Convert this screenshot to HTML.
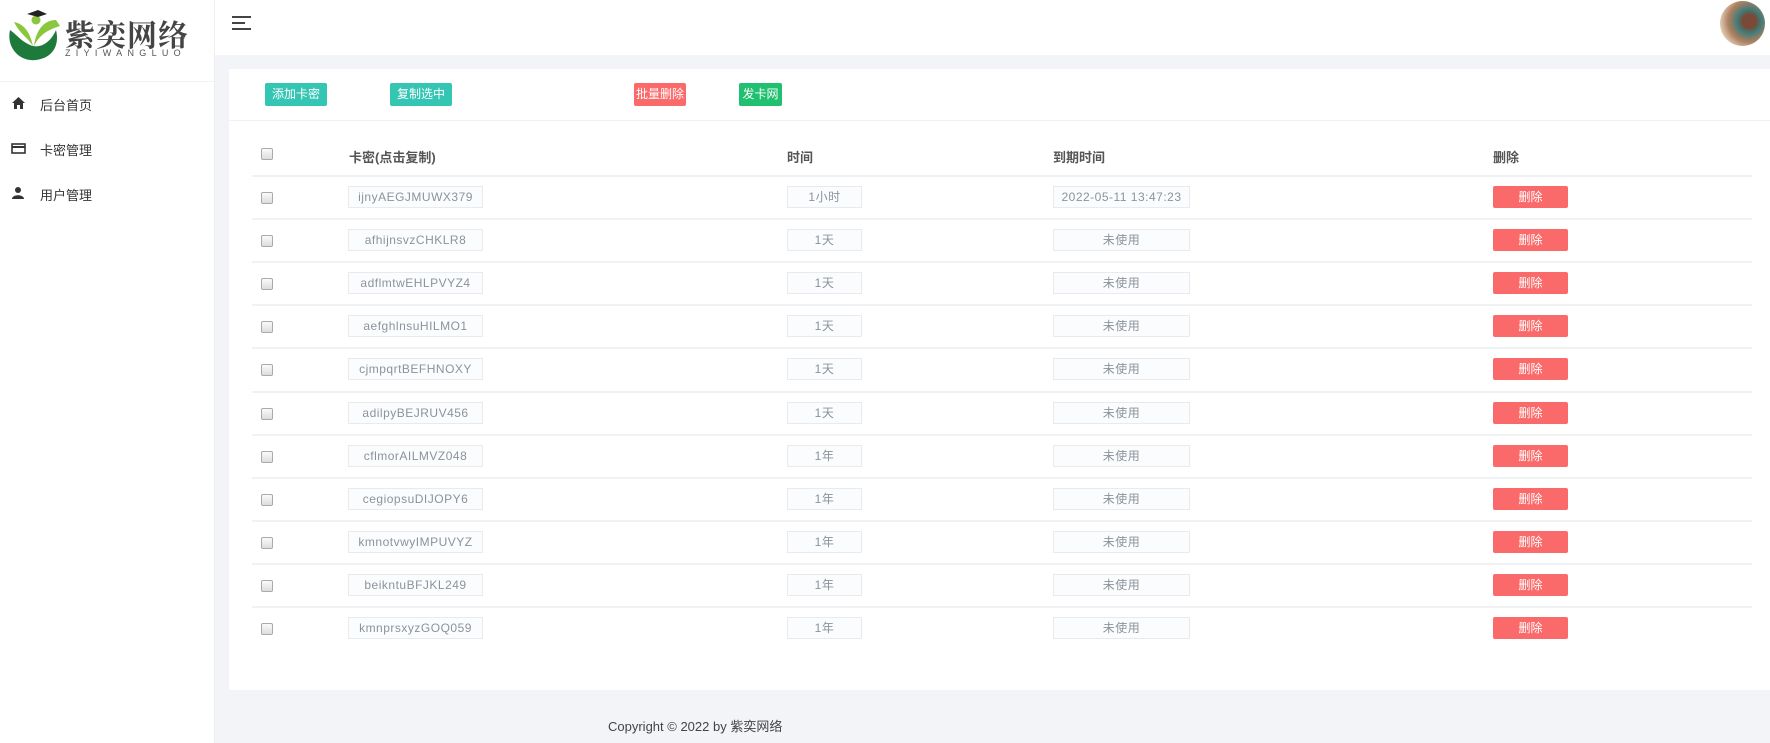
<!DOCTYPE html>
<html><head><meta charset="utf-8"><style>
*{margin:0;padding:0;box-sizing:border-box}
body{width:1770px;height:743px;overflow:hidden;background:#f3f4f8;font-family:"Liberation Sans","Noto Sans CJK SC",sans-serif;position:relative;color:#555}
.abs{position:absolute}
#side{left:0;top:0;width:215px;height:743px;background:#fff;border-right:1px solid #eceef2}
#head{left:215px;top:0;width:1555px;height:55px;background:#fff}
#card{left:229px;top:69px;width:1541px;height:621px;background:#fff}
.btn{position:absolute;top:83px;height:23px;color:#fff;font-size:12px;line-height:23px;text-align:center;border-radius:2px}
.nav{position:absolute;left:0;font-size:13px;color:#333}
.nav span{position:absolute;left:40px;top:-9px;white-space:nowrap}
.row{position:absolute;left:252px;width:1500px;height:43px;border-top:2px solid #f1f2f4}
.cb{position:absolute;left:9px;width:12px;height:12px;border:1px solid #aaa;border-radius:2px;background:linear-gradient(#fafafa,#ddd)}
.inp{position:absolute;height:22px;border:1px solid #e8eaee;background:#fbfcfd;color:#8a939d;font-size:12px;line-height:20px;text-align:center;letter-spacing:.5px}
.del{position:absolute;left:1241px;width:75px;height:22px;background:#fb6a6a;color:#fff;font-size:12px;line-height:22px;text-align:center;border-radius:2px}
.th{position:absolute;top:147px;font-size:13px;font-weight:bold;color:#555}
</style></head><body>
<div id="side" class="abs">
 <svg class="abs" style="left:6px;top:8px" width="56" height="56" viewBox="0 0 56 52">
  <path d="M4 20 C0 38 14 52 30 50 C46 48 54 36 50 20 C44 34 32 40 22 34 C14 30 10 24 4 20Z" fill="#1e7a3a"/>
  <path d="M8 12 C14 24 22 28 27 36 C24 22 18 14 8 12Z" fill="#8cc63f"/>
  <path d="M50 10 C38 10 30 20 28 36 C34 24 42 20 54 16Z" fill="#8cc63f"/>
  <circle cx="30" cy="10" r="4.5" fill="#8cc63f"/>
  <path d="M21 4 L32 0 L41 4 L32 7Z" fill="#222"/>
 </svg>
 <div class="abs" style="left:65px;top:11px;font-size:30px;font-weight:bold;color:#444;letter-spacing:1px;font-family:'Noto Serif CJK SC','Noto Sans CJK SC',serif">紫奕网络</div>
 <div class="abs" style="left:65px;top:48px;font-size:9px;color:#555;letter-spacing:5.3px">ZIYIWANGLUO</div>
 <div class="abs" style="left:0;top:81px;width:214px;border-top:1px solid #f3f3f3"></div>
 <div class="nav" style="top:104px"><svg class="abs" style="left:12px;top:-7px" width="13" height="12" viewBox="0 0 13 12"><path d="M6.5 0 L13 6 H11 V12 H8 V8 H5 V12 H2 V6 H0Z" fill="#333"/></svg><span>后台首页</span></div>
 <div class="nav" style="top:149px"><svg class="abs" style="left:11px;top:-6px" width="15" height="11" viewBox="0 0 15 11"><rect x="1" y="1" width="13" height="9" fill="none" stroke="#333" stroke-width="1.6"/><rect x="1" y="3" width="13" height="2" fill="#333"/></svg><span>卡密管理</span></div>
 <div class="nav" style="top:194px"><svg class="abs" style="left:12px;top:-7px" width="12" height="12" viewBox="0 0 12 12"><circle cx="6" cy="3" r="3" fill="#333"/><path d="M0 12 C0 7 12 7 12 12Z" fill="#333"/></svg><span>用户管理</span></div>
</div>
<div id="head" class="abs">
 <div class="abs" style="left:17px;top:16px;width:19px;height:2px;background:#444"></div>
 <div class="abs" style="left:17px;top:22px;width:13px;height:2px;background:#444"></div>
 <div class="abs" style="left:17px;top:28px;width:19px;height:2px;background:#444"></div>
 <div class="abs" style="left:1505px;top:1px;width:45px;height:45px;border-radius:50%;background:radial-gradient(circle at 65% 45%,#7a4a36 0 18%,#3d7a78 30%,#b08060 55%,#e8d8c0 80%)"></div>
</div>
<div id="card" class="abs"></div>
<div class="abs" style="left:229px;top:120px;width:1541px;border-top:1px solid #f2f2f2"></div>
<div class="btn" style="left:265px;width:62px;background:#35c5b3">添加卡密</div>
<div class="btn" style="left:390px;width:62px;background:#35c5b3">复制选中</div>
<div class="btn" style="left:634px;width:52px;background:#fb6a6a">批量删除</div>
<div class="btn" style="left:739px;width:43px;background:#1fc06f">发卡网</div>
<div class="cb abs" style="left:261px;top:148px"></div>
<div class="th" style="left:349px">卡密(点击复制)</div>
<div class="th" style="left:787px">时间</div>
<div class="th" style="left:1053px">到期时间</div>
<div class="th" style="left:1493px">删除</div>
<div id="rows"></div>
<div class="abs" style="left:608px;top:716px;font-size:13px;color:#444">Copyright © 2022 by 紫奕网络</div>
<script>
var d=[["ijnyAEGJMUWX379","1小时","2022-05-11 13:47:23"],["afhijnsvzCHKLR8","1天"],["adflmtwEHLPVYZ4","1天"],["aefghlnsuHILMO1","1天"],["cjmpqrtBEFHNOXY","1天"],["adilpyBEJRUV456","1天"],["cflmorAILMVZ048","1年"],["cegiopsuDIJOPY6","1年"],["kmnotvwyIMPUVYZ","1年"],["beikntuBFJKL249","1年"],["kmnprsxyzGOQ059","1年"]];
var h="";d.forEach(function(r,i){var t=175+i*43.1;
h+='<div class="row" style="top:'+t+'px"><div class="cb" style="top:15px"></div><div class="inp" style="left:96px;top:9px;width:135px">'+r[0]+'</div><div class="inp" style="left:535px;top:9px;width:75px">'+r[1]+'</div><div class="inp" style="left:801px;top:9px;width:137px">'+(r[2]||'未使用')+'</div><div class="del" style="top:9px">删除</div></div>';});
document.getElementById('rows').innerHTML=h;
</script>
</body></html>
